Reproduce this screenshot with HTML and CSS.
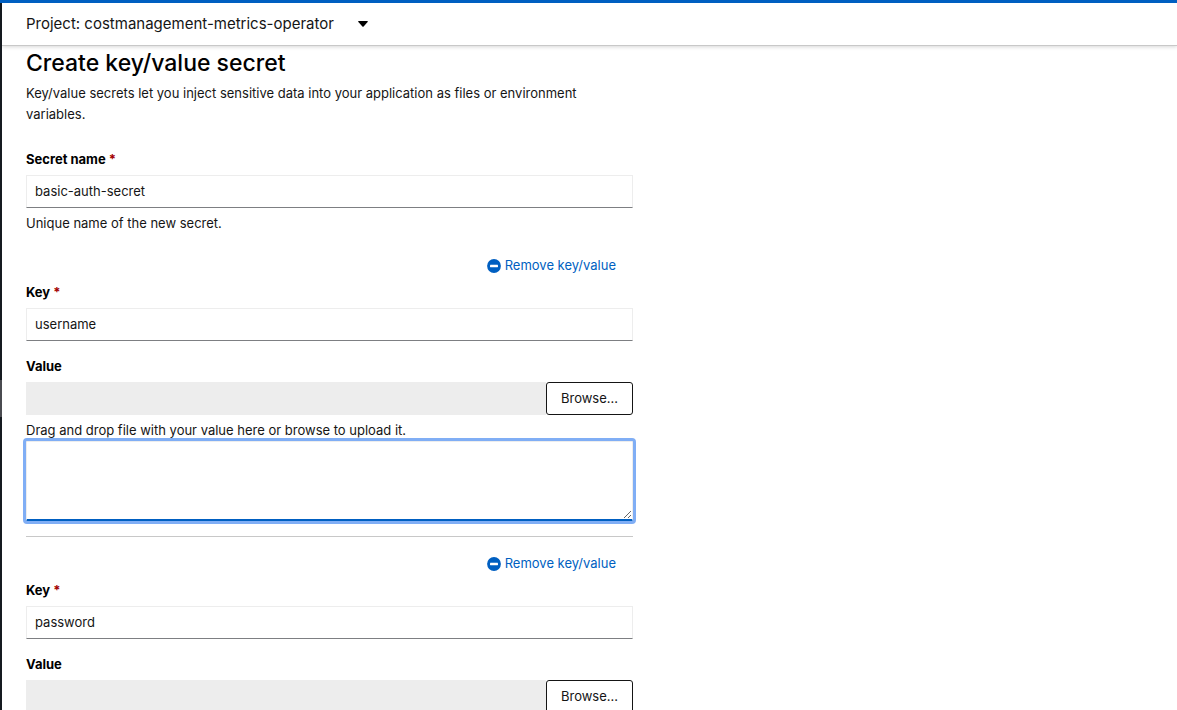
FILE: index.html
```html
<!DOCTYPE html>
<html lang="en">
<head>
<meta charset="utf-8">
<meta name="viewport" content="width=device-width, initial-scale=1">
<title>Create key/value secret</title>
<link rel="stylesheet" href="styles.css">
</head>
<body>
<div class="app">
  <header class="project-bar">
    <button class="project-toggle" type="button">
      <span>Project: costmanagement-metrics-operator</span>
      <svg class="caret" viewBox="0 0 10 6" aria-hidden="true"><path d="M.7 0h8.6q.9.3.3 1L5.6 5.4q-.6.6-1.2 0L.4 1Q-.2.3.7 0z"/></svg>
    </button>
  </header>
  <main class="content">
    <form class="secret-form">
      <h1 class="title">Create key/value secret</h1>
      <p class="description">Key/value secrets let you inject sensitive data into your application as files or environment variables.</p>

      <div class="field">
        <label class="label" for="secret-name">Secret name <span class="required">*</span></label>
        <input class="text-input" id="secret-name" type="text" value="basic-auth-secret">
        <p class="help">Unique name of the new secret.</p>
      </div>

      <section class="entry">
        <button class="remove" type="button">
          <svg class="minus" viewBox="0 0 14 14" aria-hidden="true"><circle cx="7" cy="7" r="6.9" fill="currentColor"/><rect x="3" y="5.8" width="8" height="2.4" rx=".4" fill="#fff"/></svg>
          <span>Remove key/value</span>
        </button>
        <div class="field">
          <label class="label" for="key-1">Key <span class="required">*</span></label>
          <input class="text-input" id="key-1" type="text" value="username">
        </div>
        <div class="field">
          <label class="label" for="file-1">Value</label>
          <div class="file-row">
            <input class="file-name" id="file-1" type="text" readonly>
            <button class="browse" type="button">Browse...</button>
          </div>
          <p class="help">Drag and drop file with your value here or browse to upload it.</p>
          <textarea class="value-area" aria-label="Value for username"></textarea>
        </div>
      </section>
      <hr class="divider">
      <section class="entry">
        <button class="remove" type="button">
          <svg class="minus" viewBox="0 0 14 14" aria-hidden="true"><circle cx="7" cy="7" r="6.9" fill="currentColor"/><rect x="3" y="5.8" width="8" height="2.4" rx=".4" fill="#fff"/></svg>
          <span>Remove key/value</span>
        </button>
        <div class="field">
          <label class="label" for="key-2">Key <span class="required">*</span></label>
          <input class="text-input" id="key-2" type="text" value="password">
        </div>
        <div class="field">
          <label class="label" for="file-2">Value</label>
          <div class="file-row">
            <input class="file-name" id="file-2" type="text" readonly>
            <button class="browse" type="button">Browse...</button>
          </div>
        </div>
      </section>
    </form>
  </main>
</div>
</body>
</html>
```
FILE: styles.css
```css
* {
  box-sizing: border-box;
}

body {
  margin: 0;
  background: #fff;
  color: #151515;
  font: 13px/21px Inter, "Noto Sans", sans-serif;
}

button,
input,
textarea {
  font: inherit;
  color: inherit;
}

button {
  cursor: pointer;
}

/* The 2px strip on the left is the edge of the dark navigation,
   with its selected item in a lighter grey. */
.app {
  display: flex;
  flex-direction: column;
  height: 100vh;
  overflow: hidden;
  padding-left: 2px;
  border-top: 3px solid #005fc1;
  background: linear-gradient(#151a20 377px, #4a4b50 377px, #4a4b50 414px, #151a20 414px) left top / 2px 100% no-repeat;
}

.project-bar {
  flex: none;
  display: flex;
  align-items: center;
  height: 43px;
  padding: 0 24px;
  border-bottom: 1px solid #c8c8c8;
  box-shadow: 0 1px 4px rgba(0, 0, 0, 0.16);
}

.project-toggle {
  display: flex;
  align-items: center;
  gap: 24px;
  padding: 0;
  border: 0;
  background: none;
  font-size: 15px;
  line-height: 24px;
}

.caret {
  width: 10px;
  height: 6px;
  fill: #000;
}

.content {
  flex: 1;
  min-height: 0;
  overflow: hidden;
  padding: 2px 24px 0;
}

.secret-form {
  max-width: 607px;
}

.title {
  margin: 0;
  color: #000;
  font-size: 23px;
  font-weight: 500;
  line-height: 31px;
}

.description {
  margin: 4px 0 24px;
}

.field {
  display: flex;
  flex-direction: column;
}

.field + .field {
  margin-top: 15px;
}

.label {
  margin-bottom: 5px;
  color: #000;
  font-weight: 700;
}

.required {
  color: #a30000;
}

.text-input {
  width: 100%;
  height: 33px;
  padding: 0 8px 2px;
  border: 1px solid #ededed;
  border-bottom-color: #7d7f82;
  border-radius: 0;
  outline: 0;
  background: #fff;
}

.help {
  margin: 5px 0 0;
}

.entry {
  display: flex;
  flex-direction: column;
}

.field + .entry {
  margin-top: 21px;
}

.remove {
  display: flex;
  align-items: center;
  align-self: flex-end;
  gap: 4px;
  margin: 0 17px 6px 0;
  padding: 0;
  border: 0;
  background: none;
  color: #005fc1;
}

.minus {
  width: 14px;
  height: 14px;
}

.file-row {
  display: flex;
}

.file-name {
  flex: 1;
  min-width: 0;
  height: 33px;
  padding: 0 8px;
  border: 0;
  outline: 0;
  background: #ededed;
}

.browse {
  width: 87px;
  height: 33px;
  padding: 0;
  border: 1px solid #151515;
  border-radius: 3px;
  background: #fff;
}

.value-area {
  width: 100%;
  height: 80px;
  padding: 5px 8px;
  border: 1px solid #ededed;
  border-bottom: 2px solid #005fc1;
  border-radius: 1px;
  outline: 3px solid #80aef5;
  resize: vertical;
}

.divider {
  width: 100%;
  margin: 15px 0 16px;
  border: 0;
  border-top: 1px solid #c8c8c8;
}
```
